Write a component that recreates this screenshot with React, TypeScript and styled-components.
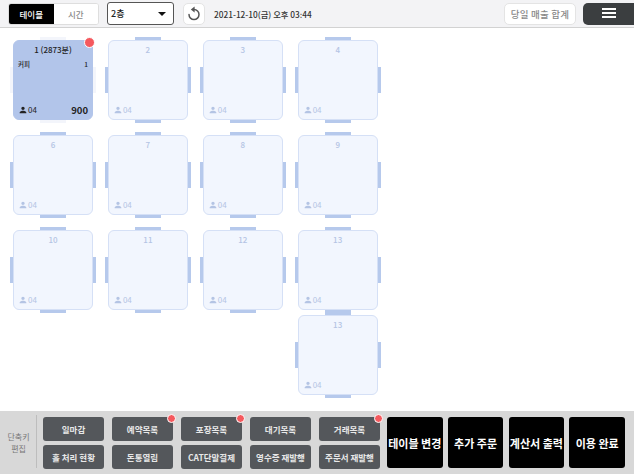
import React from "react";
import styled, { createGlobalStyle } from "styled-components";
import { MdPerson } from "react-icons/md";

const GlobalStyle = createGlobalStyle`
  html, body {
    margin: 0;
    padding: 0;
    background: #fff;
  }
  body {
    font-family: "Noto Sans CJK KR", "Noto Sans", sans-serif;
  }
`;

interface TableData {
  no: string;
  active?: boolean;
}

const tables: TableData[] = [
  { no: "1 (2873분)", active: true },
  { no: "2" },
  { no: "3" },
  { no: "4" },
  { no: "6" },
  { no: "7" },
  { no: "8" },
  { no: "9" },
  { no: "10" },
  { no: "11" },
  { no: "12" },
  { no: "13" },
  { no: "13" },
];

const shortcutKeys = [
  { label: "일마감" },
  { label: "예약목록", dot: true },
  { label: "포장목록", dot: true },
  { label: "대기목록" },
  { label: "거래목록", dot: true },
  { label: "홀 처리 현황" },
  { label: "돈통열림" },
  { label: "CAT단말결제" },
  { label: "영수증 재발행" },
  { label: "주문서 재발행" },
];

const actions = ["테이블 변경", "추가 주문", "계산서 출력", "이용 완료"];

export default function App() {
  return (
    <Page>
      <GlobalStyle />
      <TopBar>
        <Tabs>
          <Tab $on>테이블</Tab>
          <Tab>시간</Tab>
        </Tabs>
        <FloorSelect>
          <span>2층</span>
          <Caret />
        </FloorSelect>
        <RefreshButton>
          <svg width="16" height="17" viewBox="0 0 16 17" fill="none">
            <path
              d="M8 4.6a5 5 0 1 1-5 5"
              stroke="#555"
              strokeWidth="1.5"
              strokeLinecap="round"
            />
            <path d="M4.8 4.6 8.6 1.6v6z" fill="#555" />
          </svg>
        </RefreshButton>
        <DateText>2021-12-10(금) 오후 03:44</DateText>
        <SalesButton>당일 매출 합계</SalesButton>
        <MenuButton>
          <MenuLines>
            <i />
            <i />
            <i />
          </MenuLines>
        </MenuButton>
      </TopBar>

      <Floor>
        {tables.map((t, i) => (
          <Table key={i} $active={t.active} $last={i === 12}>
            <Notch $side="top" $active={t.active} />
            <Notch $side="left" $active={t.active} />
            <Notch $side="right" $active={t.active} />
            <Notch $side="bottom" $active={t.active} />
            {t.active && <RedDot $size={9} $top={-4} $right={-3} />}
            <TableNo $active={t.active}>{t.no}</TableNo>
            {t.active && (
              <OrderRow>
                <span>커피</span>
                <span>1</span>
              </OrderRow>
            )}
            <TableFoot>
              <Guests $active={t.active}>
                <MdPerson size={10} />
                04
              </Guests>
              {t.active && <Total>900</Total>}
            </TableFoot>
          </Table>
        ))}
      </Floor>

      <BottomBar>
        <ShortcutLabel>
          단축키
          <br />
          편집
        </ShortcutLabel>
        <Shortcuts>
          {shortcutKeys.map((k) => (
            <ShortcutButton key={k.label}>
              {k.label}
              {k.dot && <RedDot $size={7} $top={-3} $right={-3} />}
            </ShortcutButton>
          ))}
        </Shortcuts>
        <Actions>
          {actions.map((a) => (
            <ActionButton key={a}>{a}</ActionButton>
          ))}
        </Actions>
      </BottomBar>
    </Page>
  );
}

const Page = styled.div`
  width: 634px;
  height: 475px;
  display: flex;
  flex-direction: column;
  overflow: hidden;
  background: #fff;
`;

const TopBar = styled.div`
  height: 28px;
  box-sizing: border-box;
  flex: none;
  display: flex;
  align-items: flex-start;
  padding: 2px 0 0 8px;
  background: #f3f3f5;
  border-bottom: 1px solid #d2d2d2;
`;

const Tabs = styled.div`
  width: 91px;
  height: 22px;
  margin-top: 0.5px;
  box-sizing: border-box;
  display: flex;
  background: #fff;
  border: 1px solid #dedede;
  border-radius: 3px;
  overflow: hidden;
`;

const Tab = styled.div<{ $on?: boolean }>`
  flex: 1;
  display: flex;
  align-items: center;
  justify-content: center;
  font-size: 8.5px;
  font-weight: 500;
  color: ${(p) => (p.$on ? "#fff" : "#8a8a8a")};
  background: ${(p) => (p.$on ? "#000" : "#fff")};
`;

const FloorSelect = styled.div`
  width: 67px;
  height: 23px;
  box-sizing: border-box;
  margin-left: 8px;
  padding: 0 7px 0 3px;
  display: flex;
  align-items: center;
  justify-content: space-between;
  font-size: 9px;
  font-weight: 500;
  color: #222;
  background: #fff;
  border: 1px solid #555;
  border-radius: 3px;
`;

const Caret = styled.i`
  width: 0;
  height: 0;
  border-left: 4px solid transparent;
  border-right: 4px solid transparent;
  border-top: 4px solid #111;
`;

const RefreshButton = styled.div`
  width: 22px;
  height: 22px;
  box-sizing: border-box;
  margin-left: 9px;
  margin-top: 0.5px;
  display: flex;
  align-items: center;
  justify-content: center;
  background: #fff;
  border: 1px solid #e4e4e4;
  border-radius: 5px;
`;

const DateText = styled.div`
  margin-left: 9px;
  line-height: 24px;
  font-size: 8.3px;
  font-weight: 500;
  color: #333;
  white-space: nowrap;
`;

const SalesButton = styled.div`
  margin-left: auto;
  width: 72px;
  height: 22px;
  box-sizing: border-box;
  margin-top: 0.5px;
  display: flex;
  align-items: center;
  justify-content: center;
  font-size: 9.5px;
  letter-spacing: 0.2px;
  font-weight: 500;
  color: #888;
  background: #fff;
  border: 1px solid #e4e4e4;
  border-radius: 5px;
`;

const MenuButton = styled.div`
  width: 51px;
  height: 22px;
  margin-left: 7px;
  margin-top: 0.5px;
  display: flex;
  align-items: center;
  justify-content: center;
  background: #3b3e40;
  border-radius: 5px 0 0 5px;
`;

const MenuLines = styled.div`
  width: 14px;
  margin-top: -2px;
  display: flex;
  flex-direction: column;
  gap: 2px;
  i {
    display: block;
    height: 2px;
    background: #fff;
  }
`;

const Floor = styled.div`
  flex: 1;
  min-height: 0;
  padding: 12px 0 0 13px;
  display: grid;
  grid-template-columns: repeat(4, 80px);
  grid-auto-rows: 80px;
  column-gap: 14.9px;
  row-gap: 15px;
  align-content: start;
`;

const Table = styled.div<{ $active?: boolean; $last?: boolean }>`
  position: relative;
  height: 80px;
  box-sizing: border-box;
  padding: 3px 4px 3px;
  display: flex;
  flex-direction: column;
  background: ${(p) => (p.$active ? "#b2c5ea" : "#f2f6fe")};
  border: 1px solid ${(p) => (p.$active ? "#b2c5ea" : "#d5e0f6")};
  border-radius: 6px;
  ${(p) => p.$last && "grid-column: 4; margin-top: -10px;"}
`;

const Notch = styled.i<{ $side: "top" | "left" | "right" | "bottom"; $active?: boolean }>`
  position: absolute;
  background: ${(p) => (p.$active ? "#f3f5fb" : "#b6c9ec")};
  ${(p) =>
    p.$side === "top" || p.$side === "bottom"
      ? `left: 26px; width: 26px; height: 3px; ${p.$side}: -4px;`
      : `top: 26px; width: 3px; height: 26px; ${p.$side}: -4px;`}
`;

const RedDot = styled.i<{ $size: number; $top: number; $right: number }>`
  position: absolute;
  top: ${(p) => p.$top}px;
  right: ${(p) => p.$right}px;
  width: ${(p) => p.$size}px;
  height: ${(p) => p.$size}px;
  box-sizing: content-box;
  background: #f5595e;
  border: 1px solid #fff;
  border-radius: 50%;
`;

const TableNo = styled.div<{ $active?: boolean }>`
  text-align: center;
  font-size: 8px;
  line-height: 12px;
  font-weight: 500;
  color: ${(p) => (p.$active ? "#222" : "#b4c4e4")};
`;

const OrderRow = styled.div`
  margin-top: 2px;
  display: flex;
  justify-content: space-between;
  font-size: 6.5px;
  line-height: 12px;
  font-weight: 500;
  color: #222;
`;

const TableFoot = styled.div`
  margin-top: auto;
  display: flex;
  align-items: center;
  justify-content: space-between;
`;

const Guests = styled.div<{ $active?: boolean }>`
  display: flex;
  align-items: center;
  gap: 0;
  font-size: 8px;
  line-height: 12px;
  color: ${(p) => (p.$active ? "#222" : "#b4c4e4")};
`;

const Total = styled.div`
  font-size: 9.5px;
  line-height: 12px;
  font-weight: 700;
  color: #222;
`;

const BottomBar = styled.div`
  height: 63px;
  flex: none;
  margin-bottom: 1px;
  box-sizing: border-box;
  padding: 6px 9px 6px 7px;
  display: flex;
  background: #d8d8d8;
`;

const ShortcutLabel = styled.div`
  width: 29px;
  flex: none;
  box-sizing: border-box;
  padding-right: 6px;
  align-self: center;
  text-align: center;
  font-size: 8px;
  line-height: 12px;
  color: #777;
`;

const Shortcuts = styled.div`
  padding-left: 6px;
  margin-top: -2px;
  padding-top: 2px;
  border-left: 1.5px solid #bdbdbd;
  display: grid;
  grid-template-columns: repeat(5, 61px);
  grid-template-rows: repeat(2, 23.5px);
  column-gap: 8px;
  row-gap: 4.5px;
`;

const ShortcutButton = styled.div`
  position: relative;
  display: flex;
  align-items: center;
  justify-content: center;
  font-size: 8.5px;
  font-weight: 700;
  color: #e8e8e8;
  background: #54575b;
  border-radius: 3px;
  white-space: nowrap;
`;

const Actions = styled.div`
  margin-left: 7px;
  display: grid;
  grid-template-columns: repeat(4, 55.5px);
  column-gap: 5.3px;
`;

const ActionButton = styled.div`
  display: flex;
  align-items: center;
  justify-content: center;
  font-size: 11px;
  font-weight: 700;
  color: #fff;
  background: #000;
  border-radius: 3px;
  white-space: nowrap;
`;
